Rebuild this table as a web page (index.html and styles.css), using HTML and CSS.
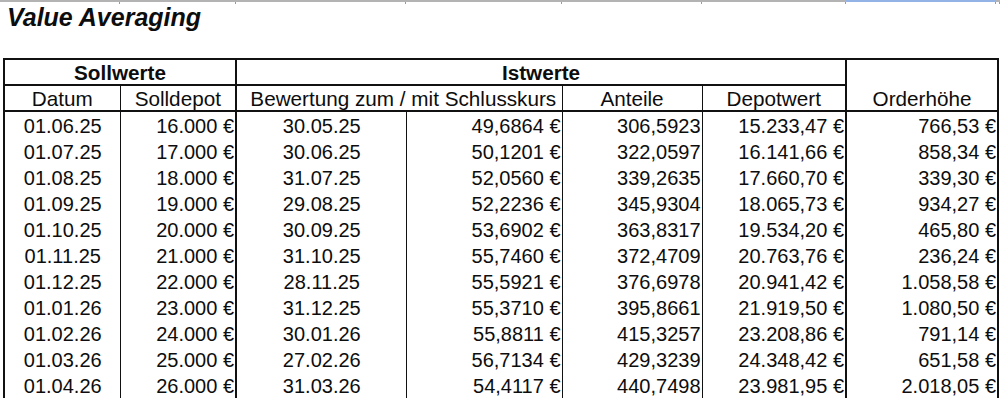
FILE: index.html
```html
<!DOCTYPE html>
<html lang="de">
<head>
<meta charset="utf-8">
<title>Value Averaging</title>
<link rel="stylesheet" href="styles.css">
</head>
<body>
<div class="grid-strip">
  <span class="gs" style="width:120px"></span>
  <span class="gs" style="width:116px"></span>
  <span class="gs" style="width:170px"></span>
  <span class="gs" style="width:156px"></span>
  <span class="gs" style="width:140px"></span>
  <span class="gs" style="width:144px"></span>
  <span class="gs sel" style="width:150px"></span>
  <span class="gs" style="width:4px"></span>
</div>
<h1 class="title">Value Averaging</h1>
<div class="sheet">
<table class="va">
  <colgroup>
    <col class="c1"><col class="c2"><col class="c3"><col class="c4"><col class="c5"><col class="c6"><col class="c7">
  </colgroup>
  <thead>
    <tr class="h1">
      <th colspan="2" class="grp">Sollwerte</th>
      <th colspan="4" class="grp tk">Istwerte</th>
      <th rowspan="2" class="ord tk">Orderhöhe</th>
    </tr>
    <tr class="h2">
      <th>Datum</th>
      <th>Solldepot</th>
      <th colspan="2" class="tk bew">Bewertung zum / mit Schlusskurs</th>
      <th>Anteile</th>
      <th>Depotwert</th>
    </tr>
  </thead>
  <tbody>
    <tr><td class="ctr">01.06.25</td><td>16.000 €</td><td class="ctr tk">30.05.25</td><td>49,6864 €</td><td>306,5923</td><td>15.233,47 €</td><td class="tk">766,53 €</td></tr>
    <tr><td class="ctr">01.07.25</td><td>17.000 €</td><td class="ctr tk">30.06.25</td><td>50,1201 €</td><td>322,0597</td><td>16.141,66 €</td><td class="tk">858,34 €</td></tr>
    <tr><td class="ctr">01.08.25</td><td>18.000 €</td><td class="ctr tk">31.07.25</td><td>52,0560 €</td><td>339,2635</td><td>17.660,70 €</td><td class="tk">339,30 €</td></tr>
    <tr><td class="ctr">01.09.25</td><td>19.000 €</td><td class="ctr tk">29.08.25</td><td>52,2236 €</td><td>345,9304</td><td>18.065,73 €</td><td class="tk">934,27 €</td></tr>
    <tr><td class="ctr">01.10.25</td><td>20.000 €</td><td class="ctr tk">30.09.25</td><td>53,6902 €</td><td>363,8317</td><td>19.534,20 €</td><td class="tk">465,80 €</td></tr>
    <tr><td class="ctr">01.11.25</td><td>21.000 €</td><td class="ctr tk">31.10.25</td><td>55,7460 €</td><td>372,4709</td><td>20.763,76 €</td><td class="tk">236,24 €</td></tr>
    <tr><td class="ctr">01.12.25</td><td>22.000 €</td><td class="ctr tk">28.11.25</td><td>55,5921 €</td><td>376,6978</td><td>20.941,42 €</td><td class="tk">1.058,58 €</td></tr>
    <tr><td class="ctr">01.01.26</td><td>23.000 €</td><td class="ctr tk">31.12.25</td><td>55,3710 €</td><td>395,8661</td><td>21.919,50 €</td><td class="tk">1.080,50 €</td></tr>
    <tr><td class="ctr">01.02.26</td><td>24.000 €</td><td class="ctr tk">30.01.26</td><td>55,8811 €</td><td>415,3257</td><td>23.208,86 €</td><td class="tk">791,14 €</td></tr>
    <tr><td class="ctr">01.03.26</td><td>25.000 €</td><td class="ctr tk">27.02.26</td><td>56,7134 €</td><td>429,3239</td><td>24.348,42 €</td><td class="tk">651,58 €</td></tr>
    <tr><td class="ctr">01.04.26</td><td>26.000 €</td><td class="ctr tk">31.03.26</td><td>54,4117 €</td><td>440,7498</td><td>23.981,95 €</td><td class="tk">2.018,05 €</td></tr>
  </tbody>
</table>
</div>
</body>
</html>
```

FILE: styles.css
```css
html, body {
  margin: 0;
  padding: 0;
  background: #fff;
}
body {
  font-family: "Liberation Sans", Arial, sans-serif;
  color: #0d0d0d;
  overflow: hidden;
}
.grid-strip {
  display: flex;
  height: 4px;
}
.gs {
  flex: none;
  border-top: 2px solid #b3b3b3;
  box-sizing: border-box;
  height: 4px;
  box-shadow: inset -1px 0 0 #9a9a9a;
}
.gs.sel {
  border-top-color: #93b2e6;
}
.title {
  margin: 0 0 0 7px;
  font-size: 25px;
  line-height: 26px;
  font-weight: bold;
  font-style: italic;
}
.sheet {
  margin-top: 28px;
  padding-left: 3px;
}
.va {
  border-collapse: collapse;
  table-layout: fixed;
  width: 994px;
  font-size: 20px;
}
.c1 { width: 116px; }
.c2 { width: 116px; }
.c3 { width: 170px; }
.c4 { width: 156px; }
.c5 { width: 140px; }
.c6 { width: 144px; }
.c7 { width: 152px; }
.va th, .va td {
  padding: 2px 2px 0 2px;
  height: 24px;
  line-height: 24px;
  white-space: nowrap;
  overflow: visible;
}
.va th {
  font-size: 20.7px;
  height: 22px;
  line-height: 22px;
  padding-top: 2px;
  font-weight: normal;
  text-align: center;
  border: 1px solid #111;
  border-top-width: 2px;
  border-bottom-width: 2px;
}
.va th.grp {
  font-weight: bold;
}
.va th.bew {
  padding-left: 8px;
  padding-right: 0;
}
.va thead tr.h1 th {
  border-top: 2px solid #111;
}
.va th.ord {
  vertical-align: bottom;
  padding-bottom: 0;
  border-right: 2px solid #111;
}
.va thead tr.h1 th:first-child,
.va thead tr.h2 th:first-child,
.va tbody td:first-child {
  border-left: 2px solid #111;
}
.va td {
  text-align: right;
  border-left: 1px solid #111;
  border-right: 1px solid #111;
  padding-right: 1px;
}
.va td.ctr {
  text-align: center;
}
.va .tk {
  border-left: 2px solid #111;
}
.va td:last-child {
  border-right: 2px solid #111;
}
```
